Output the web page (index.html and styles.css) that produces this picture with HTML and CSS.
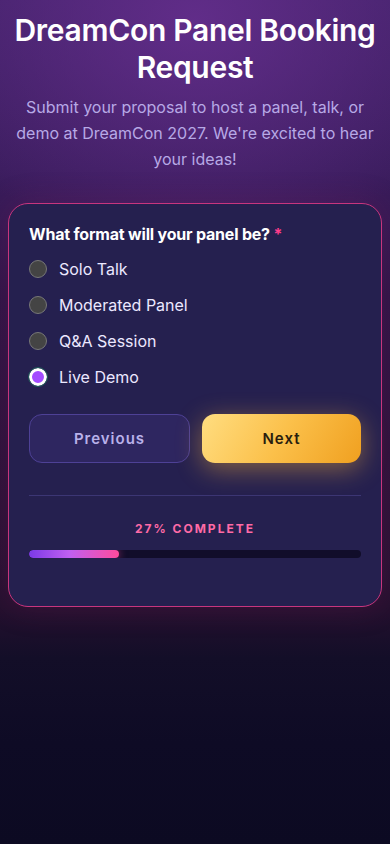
FILE: index.html
```html
<!DOCTYPE html>
<html lang="en">
<head>
  <meta charset="UTF-8" />
  <meta name="viewport" content="width=device-width, initial-scale=1" />
  <title>DreamCon Panel Booking Request</title>
  <link rel="stylesheet" href="styles.css">
</head>
<body>
  <header class="intro">
    <h1>DreamCon Panel Booking Request</h1>
    <p>Submit your proposal to host a panel, talk, or demo at DreamCon 2027. We're excited to hear your ideas!</p>
  </header>

  <form class="card">
    <fieldset class="question">
      <legend>What format will your panel be? <span class="req">*</span></legend>
      <label class="option"><input type="radio" name="format"> Solo Talk</label>
      <label class="option"><input type="radio" name="format"> Moderated Panel</label>
      <label class="option"><input type="radio" name="format"> Q&amp;A Session</label>
      <label class="option"><input type="radio" name="format" class="focused" checked> Live Demo</label>
    </fieldset>

    <div class="actions">
      <button type="button" class="btn btn-prev">Previous</button>
      <button type="button" class="btn btn-next">Next</button>
    </div>

    <div class="progress">
      <div class="progress-label">27% Complete</div>
      <div class="progress-track">
        <div class="progress-fill" style="width: 27%;"></div>
      </div>
    </div>
  </form>
</body>
</html>
```

FILE: styles.css
```css
html {
  background: #0d0a24;
}

body {
  margin: 0;
  min-height: 844px;
  padding: 12px 8px 40px;
  box-sizing: border-box;
  font-family: Inter, "Noto Sans", sans-serif;
  color: #fff;
  background:
    radial-gradient(ellipse 75% 230px at 50% 20px, rgba(100, 46, 140, 0.9) 0%, rgba(100, 46, 140, 0) 100%),
    linear-gradient(180deg, #43226a 0%, #3b1d5e 20%, #2e1446 35%, #2a1136 60%, #24102e 72%, #130e28 78%, #0e0b25 88%, #0c0a22 100%);
}

.intro {
  text-align: center;
}

h1 {
  margin: 0;
  font-family: Inter, sans-serif;
  font-size: 30px;
  line-height: 37px;
  font-weight: 600;
  letter-spacing: -0.3px;
  color: #fff;
}

.intro p {
  margin: 8px 8px 0;
  font-size: 16px;
  line-height: 26px;
  color: #b7a9e6;
}

.card {
  margin-top: 31px;
  padding: 20px 20px 48px;
  border: 1px solid #c8357e;
  border-radius: 20px;
  background: #25204f;
  box-shadow: 0 0 30px rgba(120, 30, 90, 0.3);
}

.question {
  margin: 0;
  padding: 0;
  border: none;
}

.question legend {
  padding: 0;
  margin-bottom: 7px;
  font-family: Inter, sans-serif;
  font-size: 16px;
  font-weight: 700;
  letter-spacing: -0.2px;
  color: #fff;
}

.req {
  color: #ff3d8b;
}

.option {
  display: flex;
  align-items: center;
  gap: 12px;
  height: 36px;
  font-size: 16px;
  color: #ece8ff;
}

.option input {
  appearance: none;
  margin: 0;
  width: 18px;
  height: 18px;
  border-radius: 50%;
  border: 1px solid #777;
  background: #444;
}

.option input:checked {
  border: 3px solid #fff;
  background: #a34cff;
}

.option input.focused {
  outline: 1px solid #1f5d5a;
  outline-offset: 0;
}

.actions {
  display: flex;
  gap: 12px;
  margin-top: 19px;
  padding-bottom: 32px;
  border-bottom: 1px solid #3c3674;
}

.btn {
  flex: 1;
  height: 49px;
  border-radius: 13px;
  font-family: Inter, sans-serif;
  font-size: 15px;
  font-weight: 600;
  letter-spacing: 1px;
  cursor: pointer;
}

.btn-prev {
  background: #2e2660;
  border: 1px solid #4e4196;
  color: #b9b1ea;
}

.btn-next {
  border: none;
  color: #2a1e0e;
  background: linear-gradient(120deg, #ffdd80 0%, #fbc04a 50%, #f0a020 100%);
  box-shadow: 0 6px 26px rgba(250, 180, 60, 0.45);
}

.progress {
  padding-top: 25px;
}

.progress-label {
  text-align: center;
  font-family: Inter, sans-serif;
  font-size: 12px;
  font-weight: 700;
  letter-spacing: 2px;
  text-transform: uppercase;
  color: #ff6aa6;
}

.progress-track {
  margin-top: 14px;
  height: 8px;
  border-radius: 4px;
  background: #110d2a;
  overflow: hidden;
}

.progress-fill {
  height: 100%;
  border-radius: 4px;
  background: linear-gradient(90deg, #7b3ae6 0%, #c060f2 45%, #ff4b9c 100%);
  box-shadow: 0 0 8px rgba(255, 75, 156, 0.6);
}
```
